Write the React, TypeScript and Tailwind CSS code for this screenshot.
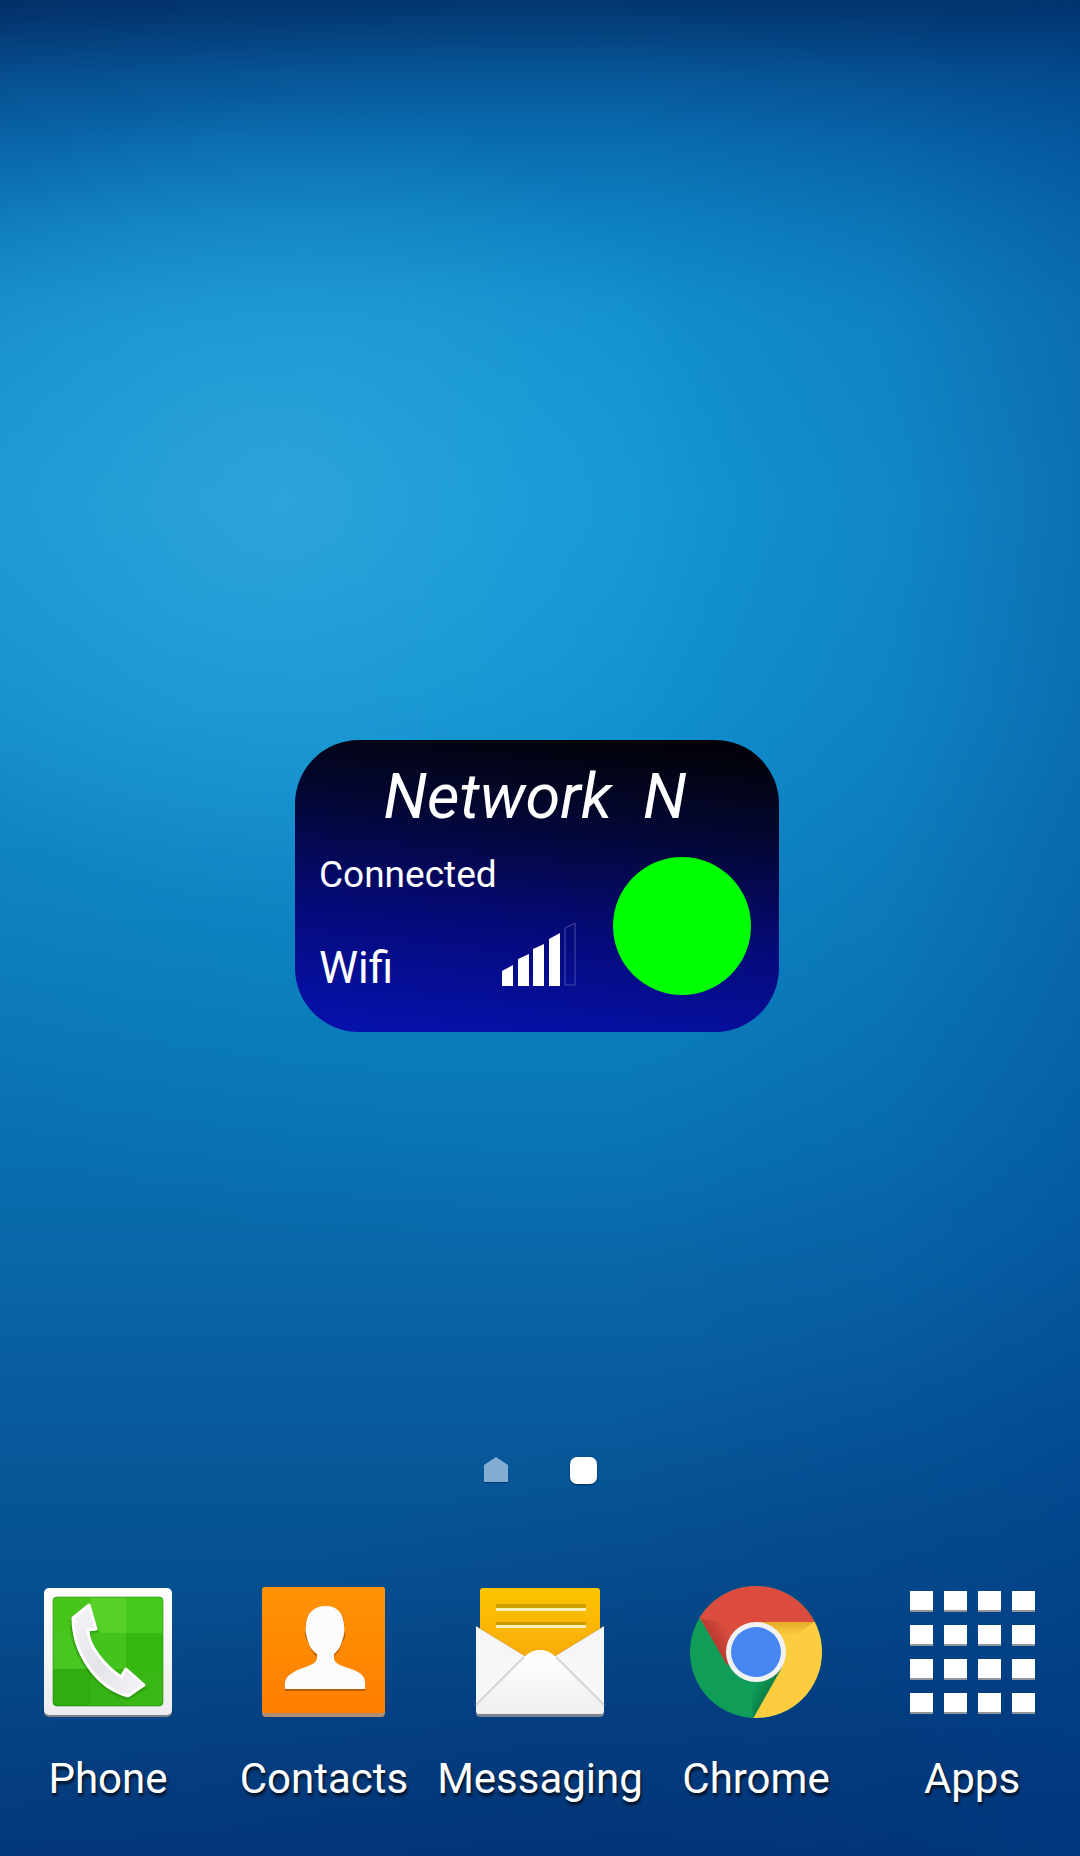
import React from 'react';

interface DockApp {
  name: string;
  icon: React.ReactNode;
}

const iconClass = 'block h-[132px] w-[132px]';

const PhoneIcon: React.FC = () => (
  <svg className={iconClass} viewBox="0 0 132 132" aria-hidden="true">
    <defs>
      <linearGradient id="phone-frame" x1="0" y1="0" x2="0" y2="1">
        <stop offset="0" stopColor="#ffffff" />
        <stop offset="1" stopColor="#ececf0" />
      </linearGradient>
      <linearGradient id="phone-handset" x1="0" y1="0" x2="1" y2="1">
        <stop offset="0" stopColor="#f6f6f8" />
        <stop offset="0.5" stopColor="#e4e3ea" />
        <stop offset="1" stopColor="#f4f4f6" />
      </linearGradient>
      <clipPath id="phone-clip">
        <rect x="11" y="11" width="110" height="109" rx="4" />
      </clipPath>
    </defs>
    <rect x="2" y="4" width="128" height="127" rx="5" fill="#7d8088" />
    <rect x="2" y="2" width="128" height="127" rx="5" fill="url(#phone-frame)" />
    <g clipPath="url(#phone-clip)">
      <rect x="11" y="11" width="110" height="109" fill="#3fc318" />
      <rect x="11" y="11" width="38" height="36" fill="#48c51a" />
      <rect x="49" y="11" width="35" height="36" fill="#57d02a" />
      <rect x="84" y="11" width="37" height="36" fill="#46c91a" />
      <rect x="11" y="47" width="38" height="36" fill="#49c622" />
      <rect x="49" y="47" width="35" height="36" fill="#44c21e" />
      <rect x="84" y="47" width="37" height="36" fill="#34b80f" />
      <rect x="11" y="83" width="38" height="37" fill="#31ac11" />
      <rect x="49" y="83" width="35" height="37" fill="#38b315" />
      <rect x="84" y="83" width="37" height="37" fill="#39b714" />
    </g>
    <rect x="11" y="11" width="110" height="109" rx="4" fill="none" stroke="#1f8a0a" strokeOpacity="0.6" />
    <path
      d="M47 20 L56 46 L47 47 C48 62 65 80 79 92 L84 84 L103 102 L86 113 C53 104 28 67 29 34 Z"
      fill="#1c7a08"
      fillOpacity="0.45"
      stroke="#1c7a08"
      strokeOpacity="0.25"
      strokeWidth="3"
    />
    <path
      d="M47 19 L54 43 L46 44 C46 60 63 80 79 91 L84 83 L102 99 L86 110 C54 102 31 66 31 32 Z"
      fill="url(#phone-handset)"
      stroke="#ffffff"
      strokeWidth="3"
      strokeLinejoin="round"
    />
  </svg>
);

const ContactsIcon: React.FC = () => (
  <svg className={iconClass} viewBox="0 0 132 132" aria-hidden="true">
    <defs>
      <linearGradient id="contacts-bg" x1="0" y1="0" x2="0" y2="1">
        <stop offset="0" stopColor="#ff9305" />
        <stop offset="1" stopColor="#ff7e00" />
      </linearGradient>
    </defs>
    <rect x="4" y="1" width="123" height="130" rx="4" fill="#b08d70" />
    <rect x="4" y="1" width="123" height="126" rx="3" fill="url(#contacts-bg)" />
    <path
      d="M27 105 C26 90 30 88 37 87 C48 81 59 81 59 71 C53 66 51 58 50 56 C46 50 46 46 48 44 C47 28 54 22 68 21 C81 22 88 28 86 44 C88 48 88 52 84 56 C83 61 81 66 76 70 C76 81 88 82 98 86 C107 90 108 94 107 105 Z"
      fill="#8a4500"
      fillOpacity="0.6"
    />
    <path
      d="M27 103 C26 92 29 90 36 86 C46 80 58 80 59 72 L59 68 C53 64 51 59 50 55 C48 50 47 45 48 40 C48 27 56 20 68 20 C79 20 86 27 86 40 C87 45 86 50 84 55 C83 59 81 64 76 68 L76 72 C77 80 88 80 98 85 C106 89 108 93 107 103 Z"
      fill="#fcfcfd"
    />
  </svg>
);

const MessagingIcon: React.FC = () => (
  <svg className={iconClass} viewBox="0 0 132 132" aria-hidden="true">
    <defs>
      <linearGradient id="message-paper" x1="0" y1="0" x2="0" y2="1">
        <stop offset="0" stopColor="#fcc400" />
        <stop offset="1" stopColor="#faa80c" />
      </linearGradient>
      <linearGradient id="message-front" x1="0" y1="0" x2="0" y2="1">
        <stop offset="0" stopColor="#ffffff" />
        <stop offset="1" stopColor="#efeff1" />
      </linearGradient>
    </defs>
    <path d="M6 80 V5 Q6 2 9 2 H123 Q126 2 126 5 V80 Z" fill="url(#message-paper)" />
    <rect x="22" y="18" width="90" height="4" fill="#cf9f00" />
    <rect x="22" y="22" width="90" height="3" fill="#fff0b8" />
    <rect x="22" y="36" width="90" height="3" fill="#cf9800" />
    <rect x="22" y="39" width="90" height="3" fill="#fff0b8" />
    <path d="M2 119 V127 Q2 131 6 131 H126 Q130 131 130 127 V119 Z" fill="#7c8491" />
    <path
      d="M2 40 L51 70 Q58 64 66 64 Q74 64 81 70 L130 40 V124 Q130 128 126 128 H6 Q2 128 2 124 Z"
      fill="#f6f6f8"
    />
    <path d="M2 40 L51 70 M130 40 L81 70" stroke="#a06a00" strokeOpacity="0.35" strokeWidth="1" />
    <path
      d="M2 119 L48 73 Q57 64 66 64 Q75 64 84 73 L130 119 V124 Q130 128 126 128 H6 Q2 128 2 124 Z"
      fill="url(#message-front)"
    />
    <path d="M2 119 L50 71 M130 119 L82 71" stroke="#d6d6da" strokeWidth="2" />
  </svg>
);

const ChromeIcon: React.FC = () => (
  <svg className={iconClass} viewBox="0 0 132 132" aria-hidden="true">
    <defs>
      <clipPath id="chrome-clip">
        <circle cx="66" cy="66" r="66" />
      </clipPath>
      <linearGradient id="chrome-red-shade" gradientUnits="userSpaceOnUse" x1="24" y1="56" x2="40" y2="47">
        <stop offset="0" stopColor="#7a1d14" stopOpacity="0.35" />
        <stop offset="1" stopColor="#7a1d14" stopOpacity="0" />
      </linearGradient>
      <linearGradient id="chrome-yellow-shade" gradientUnits="userSpaceOnUse" x1="100" y1="36" x2="100" y2="50">
        <stop offset="0" stopColor="#b06a00" stopOpacity="0.35" />
        <stop offset="1" stopColor="#b06a00" stopOpacity="0" />
      </linearGradient>
      <linearGradient id="chrome-green-shade" gradientUnits="userSpaceOnUse" x1="78" y1="106" x2="65" y2="99">
        <stop offset="0" stopColor="#064a2a" stopOpacity="0.35" />
        <stop offset="1" stopColor="#064a2a" stopOpacity="0" />
      </linearGradient>
    </defs>
    <g clipPath="url(#chrome-clip)">
      <rect width="132" height="132" fill="#0f9d58" />
      <path d="M-4 8 L37 79 L66 66 L90 36 H140 V-4 H-4 Z" fill="#db4c3f" />
      <path d="M11 33 L37 79 L66 66 L50 40 Z" fill="url(#chrome-red-shade)" />
      <path d="M66 36 H140 V140 H59 L92 81 Z" fill="#fdcd40" />
      <path d="M66 36 H124 L90 60 Z" fill="url(#chrome-yellow-shade)" />
      <path d="M63 132 L92 82 L60 90 Z" fill="url(#chrome-green-shade)" />
    </g>
    <circle cx="66" cy="66" r="30" fill="#f2f2f2" />
    <circle cx="66" cy="66" r="25" fill="#4687f4" />
  </svg>
);

const cells = [4, 38, 72, 106];

const AppsIcon: React.FC = () => (
  <svg className={iconClass} viewBox="0 0 132 132" aria-hidden="true">
    {cells.map((y) =>
      cells.map((x) => (
        <g key={`${x}-${y}`}>
          <rect x={x} y={y + 1} width="23" height="21" fill="#8f959d" />
          <rect x={x} y={y + 1} width="23" height="19" fill="#ffffff" />
        </g>
      ))
    )}
  </svg>
);

const SignalBars: React.FC = () => (
  <svg className="block h-16 w-[76px]" viewBox="0 0 76 64" role="img" aria-label="Signal strength 4 of 5">
    <path d="M1 49 L12 43 V64 H1 Z" fill="#ffffff" />
    <path d="M17 37 L28 32 V64 H17 Z" fill="#ffffff" />
    <path d="M32 27 L43 22 V64 H32 Z" fill="#ffffff" />
    <path d="M48 17 L59 11 V64 H48 Z" fill="#ffffff" />
    <path d="M64 6 L74 1 V63 H64 Z" fill="none" stroke="#4a4aa8" strokeWidth="1" />
  </svg>
);

const NetworkWidget: React.FC = () => (
  <section className="flex h-[292px] w-[484px] flex-col justify-between rounded-[64px] bg-[linear-gradient(186deg,#02030a_6%,#04073a_34%,#050a78_62%,#0712b0_100%)] pt-[21px] pr-7 pb-[37px] pl-6">
    <h1 className="text-center text-[63px] leading-[72px] font-normal whitespace-pre italic">
      {'Network  N'}
    </h1>
    <div className="flex h-[140px] justify-between">
      <div className="flex w-[258px] flex-col justify-between">
        <p className="text-[37px] leading-[40px]">Connected</p>
        <div className="flex h-[52px] items-end justify-between">
          <p className="text-[44px] leading-[54px]">Wifi</p>
          <div className="pb-[9px]">
            <SignalBars />
          </div>
        </div>
      </div>
      <div className="h-[138px] w-[138px] self-end rounded-full bg-[#00ff00]" />
    </div>
  </section>
);

const PageIndicator: React.FC = () => (
  <nav className="flex items-center justify-center gap-[62px]" aria-label="Home screen pages">
    <button type="button" aria-label="Page 1">
      <svg className="block h-7 w-6" viewBox="0 0 24 28" aria-hidden="true">
        <path d="M0 10 L12 2 L24 10 V27 H0 Z" fill="#06396f" />
        <path d="M0 9 L12 1 L24 9 V26 H0 Z" fill="#84add2" />
      </svg>
    </button>
    <button
      type="button"
      aria-label="Page 2"
      aria-current="page"
      className="h-[27px] w-[27px] rounded-[7px] bg-white shadow-[0_1px_2px_#022a55]"
    />
  </nav>
);

const dockApps: DockApp[] = [
  { name: 'Phone', icon: <PhoneIcon /> },
  { name: 'Contacts', icon: <ContactsIcon /> },
  { name: 'Messaging', icon: <MessagingIcon /> },
  { name: 'Chrome', icon: <ChromeIcon /> },
  { name: 'Apps', icon: <AppsIcon /> },
];

const Dock: React.FC = () => (
  <footer className="grid grid-cols-5">
    {dockApps.map((app) => (
      <button key={app.name} type="button" className="flex flex-col items-center gap-[33px]">
        {app.icon}
        <span className="text-[42px] leading-[56px] [text-shadow:1px_3px_3px_rgba(0,0,0,0.75)]">
          {app.name}
        </span>
      </button>
    ))}
  </footer>
);

export default function App() {
  return (
    <div className="flex min-h-screen flex-col bg-[linear-gradient(180deg,rgba(0,34,88,0.5)_0%,rgba(0,44,104,0.22)_4%,rgba(0,60,130,0.14)_8%,rgba(0,70,140,0)_16%),linear-gradient(155deg,rgba(0,40,110,0)_72%,rgba(0,40,110,0.45)_100%),linear-gradient(90deg,rgba(0,76,150,0)_58%,rgba(0,76,150,0.18)_82%,rgba(0,76,150,0.48)_100%),radial-gradient(ellipse_42%_22%_at_26%_27%,rgba(60,174,222,0.6),rgba(50,170,220,0.36)_50%,rgba(40,165,220,0)),radial-gradient(ellipse_90%_40%_at_50%_28%,rgba(10,152,220,0.65),rgba(10,150,218,0.36)_50%,rgba(10,140,210,0)),linear-gradient(180deg,#033570_0%,#07488a_3%,#0a60a2_7%,#1179b7_12%,#198ac3_18%,#1e93ca_27%,#178bc5_38%,#127fbb_46%,#0c77b3_54%,#096fae_62%,#0963a5_70%,#07589a_78%,#065090_85%,#054485_92%,#033a7c_100%)] font-[Roboto,sans-serif] text-white">
      <div className="flex-[740]" />
      <main className="flex justify-center pr-[30px] pl-6">
        <NetworkWidget />
      </main>
      <div className="flex-[424]" />
      <PageIndicator />
      <div className="pt-[102px] pb-[49px]">
        <Dock />
      </div>
    </div>
  );
}
